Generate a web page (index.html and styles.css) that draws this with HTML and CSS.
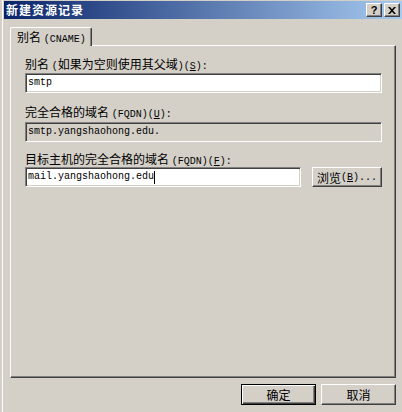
FILE: index.html
```html
<!DOCTYPE html>
<html lang="zh-CN">
<head>
    <meta charset="UTF-8">
    <title>新建资源记录</title>
    <link rel="stylesheet" href="styles.css">
</head>
<body>
    <div class="window">
        <div class="titlebar">
            <span class="title">新建资源记录</span>
            <div class="caption-btns">
                <span class="cap-btn help">?</span>
                <span class="cap-btn">
                    <svg width="8" height="7" viewBox="0 0 8 7">
                        <path d="M0 0h2l2 2.2L6 0h2L5 3.5 8 7H6L4 4.8 2 7H0l3-3.5z" fill="#000"/>
                    </svg>
                </span>
            </div>
        </div>

        <div class="client">
            <div class="tab">别名 <span class="en">(CNAME)</span></div>
            <div class="panel">
                <div class="label l1">别名 <span class="en">(</span>如果为空则使用其父域<span class="en">)(<u>S</u>):</span></div>
                <div class="field f1">smtp</div>

                <div class="label l2">完全合格的域名 <span class="en">(FQDN)(<u>U</u>):</span></div>
                <div class="field f2 disabled">smtp.yangshaohong.edu.</div>

                <div class="label l3">目标主机的完全合格的域名 <span class="en">(FQDN)(<u>F</u>):</span></div>
                <div class="row">
                    <div class="field target">mail.yangshaohong.edu<span class="caret"></span></div>
                    <div class="btn browse">浏览<span class="en">(<u>B</u>)...</span></div>
                </div>
            </div>

            <div class="actions">
                <div class="btn big default">确定</div>
                <div class="btn big">取消</div>
            </div>
        </div>
    </div>
</body>
</html>
```

FILE: styles.css
```css
body {
    margin: 0;
    width: 402px;
    height: 412px;
    overflow: hidden;
    background: #d4d0c8;
    font-family: "Noto Sans CJK SC", sans-serif;
    font-size: 12px;
    color: #000;
}
.window {
    margin-left: 2px;
    border-left: 1px solid #fff;
    padding: 1px 0 0 1px;
    height: 411px;
}
.titlebar {
    height: 18px;
    background: linear-gradient(to right, #0a246a, #a6caf0);
    display: flex;
    align-items: center;
    justify-content: space-between;
    padding: 0 2px;
}
.title {
    color: #fff;
    font-weight: bold;
    letter-spacing: 1px;
    line-height: 18px;
}
.caption-btns {
    display: flex;
    gap: 2px;
}
.cap-btn {
    width: 16px;
    height: 14px;
    box-sizing: border-box;
    background: #d4d0c8;
    border: 1px solid;
    border-color: #fff #404040 #404040 #fff;
    box-shadow: inset -1px -1px #808080;
    display: flex;
    align-items: center;
    justify-content: center;
}
.help {
    font: bold 11px "Liberation Sans", sans-serif;
    line-height: 12px;
}
.client {
    padding: 8px 6px 0 6px;
}
.en {
    font-family: "Liberation Mono", monospace;
    font-size: 10px;
}
.tab {
    width: 82px;
    height: 19px;
    box-sizing: border-box;
    border-top: 1px solid #fff;
    border-left: 1px solid #fff;
    border-right: 1px solid #404040;
    box-shadow: inset -1px 0 #808080;
    border-radius: 2px 2px 0 0;
    padding-left: 6px;
    line-height: 17px;
    background: #d4d0c8;
    position: relative;
    z-index: 1;
    margin-bottom: -1px;
}
.panel {
    height: 333px;
    box-sizing: border-box;
    border: 1px solid;
    border-color: #fff #404040 #404040 #fff;
    box-shadow: inset -1px -1px #808080;
    padding: 11px 13px 0 14px;
}
.label {
    height: 14px;
    line-height: 14px;
}
.l2 {
    margin-top: 12px;
}
.l3 {
    margin-top: 10px;
}
.field {
    height: 20px;
    box-sizing: border-box;
    border: 1px solid;
    border-color: #808080 #fff #fff #808080;
    box-shadow: inset 1px 1px #404040, inset -1px -1px #d4d0c8;
    background: #fff;
    padding-left: 2px;
    font-family: "Liberation Mono", monospace;
    font-size: 10px;
    line-height: 18px;
    display: flex;
    align-items: center;
}
.f1 {
    margin-top: 2px;
}
.f2 {
    margin-top: 3px;
}
.disabled {
    background: #d4d0c8;
}
.row {
    margin-top: 1px;
    display: flex;
    justify-content: space-between;
}
.target {
    width: 276px;
}
.caret {
    display: inline-block;
    width: 1px;
    height: 13px;
    background: #000;
}
.btn {
    box-sizing: border-box;
    border: 1px solid;
    border-color: #fff #404040 #404040 #fff;
    box-shadow: inset -1px -1px #808080;
    display: flex;
    align-items: center;
    justify-content: center;
}
.browse {
    width: 70px;
    height: 20px;
}
.actions {
    margin-top: 6px;
    display: flex;
    justify-content: flex-end;
    gap: 5px;
}
.big {
    width: 75px;
    height: 21px;
}
.default {
    border-color: #000;
    box-shadow: inset 1px 1px #fff, inset -1px -1px #404040, inset -2px -2px #808080;
}
```
